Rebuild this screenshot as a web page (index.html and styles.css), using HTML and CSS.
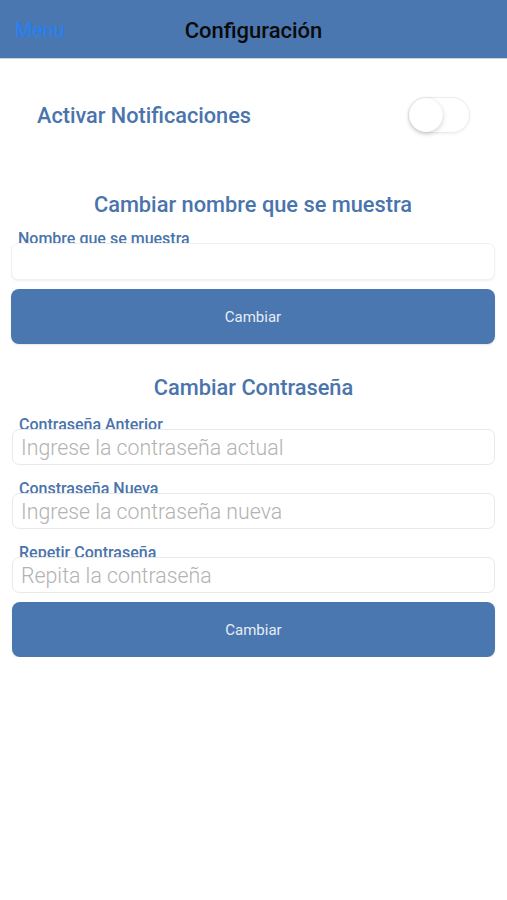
FILE: index.html
```html
<!DOCTYPE html>
<html lang="es">
<head>
<meta charset="utf-8">
<title>Configuración</title>
<link rel="stylesheet" href="styles.css">
</head>
<body>
<header class="navbar">
  <span class="nav-menu">Menu</span>
  <span class="nav-title">Configuración</span>
</header>
<main class="content">
  <div class="notif-row">
    <span class="notif-label">Activar Notificaciones</span>
    <span class="toggle"><span class="knob"></span></span>
  </div>

  <section class="section section-name">
    <h2 class="section-title">Cambiar nombre que se muestra</h2>
    <div class="field">
      <label class="field-label">Nombre que se muestra</label>
      <div class="input input-tall"></div>
    </div>
    <button class="btn">Cambiar</button>
  </section>

  <section class="section section-pass">
    <h2 class="section-title">Cambiar Contraseña</h2>
    <div class="field">
      <label class="field-label">Contraseña Anterior</label>
      <div class="input"><span class="placeholder">Ingrese la contraseña actual</span></div>
    </div>
    <div class="field">
      <label class="field-label">Constraseña Nueva</label>
      <div class="input"><span class="placeholder">Ingrese la contraseña nueva</span></div>
    </div>
    <div class="field">
      <label class="field-label">Repetir Contraseña</label>
      <div class="input"><span class="placeholder">Repita la contraseña</span></div>
    </div>
    <button class="btn">Cambiar</button>
  </section>
</main>
</body>
</html>
```

FILE: styles.css
```css
* { box-sizing: border-box; }
html, body {
  margin: 0;
  padding: 0;
  background: #ffffff;
  font-family: Roboto, "Liberation Sans", sans-serif;
}
.navbar {
  height: 59px;
  background: #4a77b0;
  border-bottom: 1px solid #c8d3e2;
  display: flex;
  align-items: center;
  position: relative;
  padding: 0 15px;
}
.nav-menu {
  color: #2580f8;
  font-size: 20px;
  padding-top: 2px;
}
.nav-title {
  position: absolute;
  left: 0;
  right: 0;
  text-align: center;
  color: #0a0a0a;
  font-size: 22px;
  font-weight: 500;
  padding-top: 2px;
  pointer-events: none;
}
.content {
  display: flex;
  flex-direction: column;
}
.notif-row {
  display: flex;
  align-items: center;
  justify-content: space-between;
  margin-top: 38px;
  height: 36px;
  padding: 0 37px;
}
.notif-label {
  color: #4a74ac;
  font-size: 21.7px;
  font-weight: 500;
}
.toggle {
  width: 62px;
  height: 36px;
  border-radius: 18px;
  background: #ffffff;
  border: 1px solid #ececec;
  box-shadow: 0 1px 3px rgba(0,0,0,0.06);
  position: relative;
}
.knob {
  position: absolute;
  left: 0;
  top: 0;
  width: 34px;
  height: 34px;
  border-radius: 50%;
  background: #ffffff;
  box-shadow: 0 2px 5px rgba(0,0,0,0.16), 0 0 1px rgba(0,0,0,0.12);
}
.section {
  display: flex;
  flex-direction: column;
}
.section-name {
  margin-top: 59px;
  padding: 0 12px 0 11px;
}
.section-pass {
  margin-top: 31px;
  padding: 0 12px 0 12px;
}
.section-title {
  margin: 0;
  text-align: center;
  color: #4a74ac;
  font-size: 21.8px;
  font-weight: 500;
  line-height: 26px;
}
.section-name .section-title { margin-bottom: 13px; }
.section-pass .section-title { margin-bottom: 16px; }
.field {
  display: flex;
  flex-direction: column;
  margin-bottom: 16px;
}
.section-name .field { margin-bottom: 9px; }
.section-pass .field:nth-of-type(3) { margin-bottom: 9px; }
.field-label {
  display: block;
  height: 12px;
  overflow: hidden;
  line-height: 15px;
  font-size: 16px;
  font-weight: 500;
  color: #4a74ac;
  padding-left: 7px;
}
.input {
  height: 36px;
  background: #ffffff;
  border: 1px solid #e9e9e9;
  border-radius: 7px;
  display: flex;
  align-items: center;
  padding-left: 8px;
}
.input-tall {
  height: 37px;
  border-color: #f1f1f1;
  box-shadow: 0 1px 2px rgba(0,0,0,0.06);
}
.placeholder {
  color: #b2b2b2;
  font-size: 21.3px;
  font-weight: 300;
}
.btn {
  height: 55px;
  border: none;
  border-radius: 8px;
  background: #4a77b0;
  color: #e6edf6;
  font-family: Roboto, "Liberation Sans", sans-serif;
  font-size: 15px;
  box-shadow: 0 1px 2px rgba(0,0,0,0.1);
}
```
